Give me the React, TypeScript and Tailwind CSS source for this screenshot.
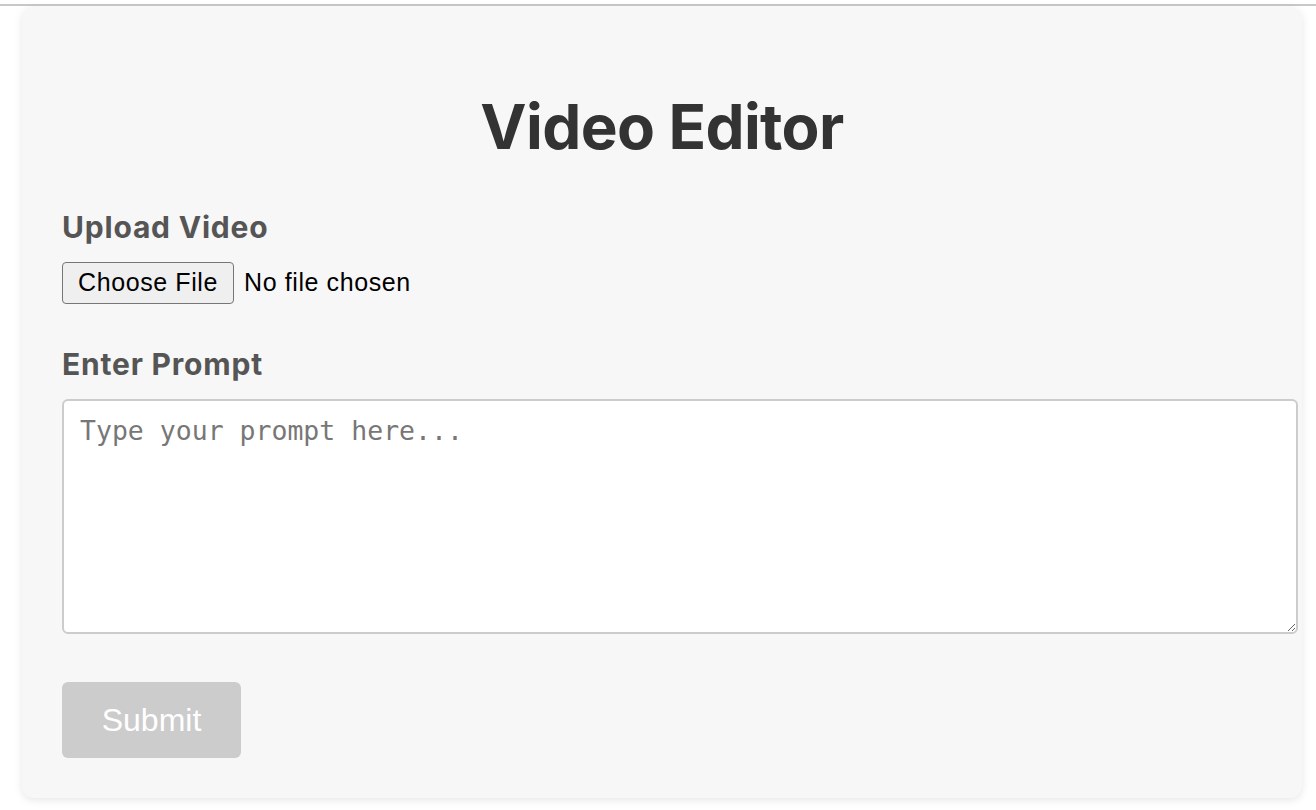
export default function App() {
  return (
    <div className="min-h-screen bg-white pt-[4px]" style={{ fontFamily: "Inter, sans-serif" }}>
      <div className="h-[2px] bg-[#c8c8c8]" />
      <div className="ml-[22px] mt-[1px] w-[1280px] rounded-[12px] bg-[#f7f7f7] px-[40px] pt-[40px] pb-[40px] shadow-[0_2px_8px_rgba(0,0,0,0.1)]">
        <h1 className="mt-[44px] text-center text-[62px] font-bold leading-[72px] tracking-[-0.01em] text-[#333]">
          Video Editor
        </h1>

        <div className="mt-[46px]">
          <label className="block text-[30px] font-bold leading-[36px] tracking-[0.8px] text-[#555]">Upload Video</label>
          <input
            type="file"
            accept="video/*"
            className="mt-[17px] block h-[42px] text-[25px] tracking-[0.6px] text-black file:mr-[10px] file:h-[42px] file:rounded-[4px] file:border file:border-solid file:border-[#767676] file:bg-[#efefef] file:px-[15px] file:text-[25px] file:tracking-[0.6px] file:text-black"
            style={{ fontFamily: '"Liberation Sans", Arial, sans-serif' }}
          />
        </div>

        <div className="mt-[42px]">
          <label className="block text-[30px] font-bold leading-[36px] tracking-[0.8px] text-[#555]">Enter Prompt</label>
          <textarea
            placeholder="Type your prompt here..."
            className="mt-[17px] box-content block h-[199px] w-full rounded-[6px] border-2 border-[#ccc] bg-white p-[16px] text-[26.5px] leading-[27px] text-black placeholder:text-[#777]"
            style={{ fontFamily: '"DejaVu Sans Mono", monospace' }}
          />
        </div>

        <button
          disabled
          className="mt-[48px] h-[76px] w-[179px] rounded-[6px] bg-[#ccc] text-[32px] text-white"
          style={{ fontFamily: '"Liberation Sans", Arial, sans-serif' }}
        >
          Submit
        </button>
      </div>
    </div>
  );
}
